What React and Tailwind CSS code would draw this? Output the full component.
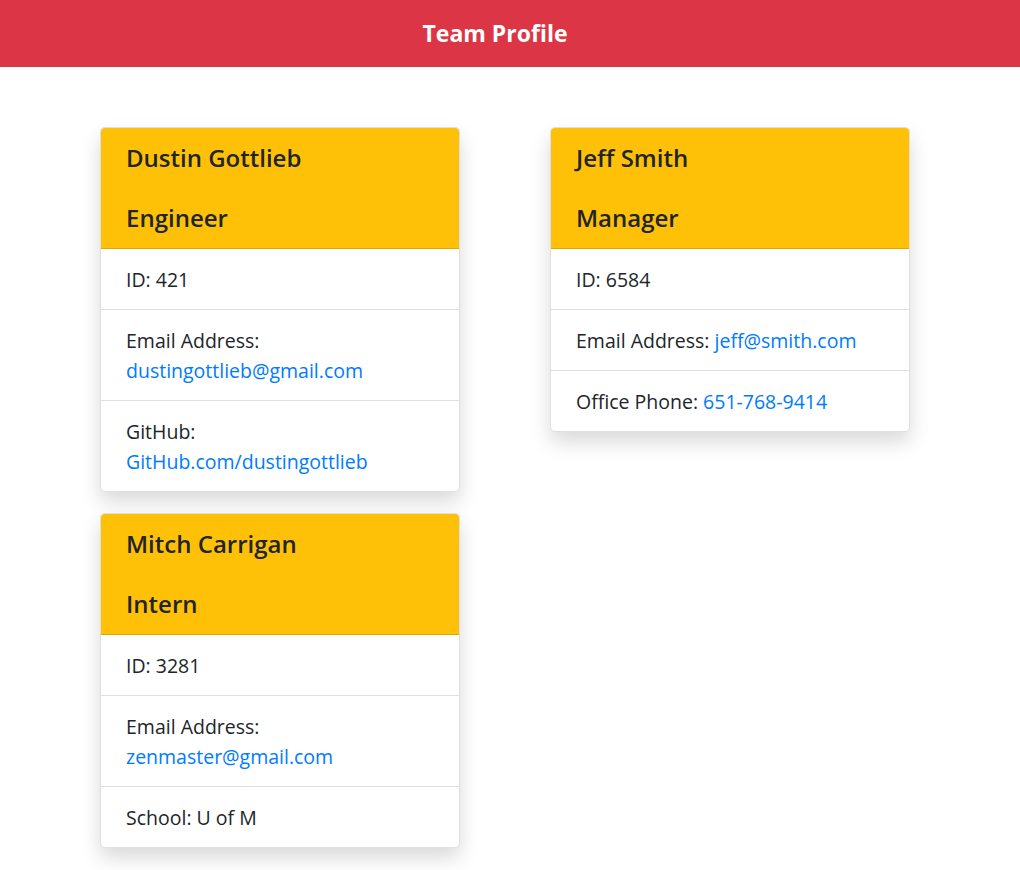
import React from "react";

const team = [
  [
    {
      name: "Dustin Gottlieb",
      role: "Engineer",
      id: "421",
      email: "dustingottlieb@gmail.com",
      extraLabel: "GitHub:",
      extra: "GitHub.com/dustingottlieb",
      extraLink: true,
    },
    {
      name: "Mitch Carrigan",
      role: "Intern",
      id: "3281",
      email: "zenmaster@gmail.com",
      extraLabel: "School:",
      extra: "U of M",
      extraLink: false,
    },
  ],
  [
    {
      name: "Jeff Smith",
      role: "Manager",
      id: "6584",
      email: "jeff@smith.com",
      extraLabel: "Office Phone:",
      extra: "651-768-9414",
      extraLink: true,
    },
  ],
];

const EmployeeCard = ({ person }) => {
  return (
    <div className="w-[360px] rounded-[5px] border border-black/[.125] bg-white shadow-[0_10px_20px_rgba(0,0,0,0.15)] overflow-hidden">
      <div className="bg-[#ffc107] border-b border-black/[.125] px-[25px] py-[12px] text-[24px] leading-[36px] font-semibold text-[#212529]">
        <div>{person.name}</div>
        <div className="mt-[24px]">{person.role}</div>
      </div>
      <ul className="text-[19.5px] leading-[30px] text-[#212529]">
        <li className="px-[25px] pt-[16px] pb-[14px] border-b border-black/[.125]">
          ID: {person.id}
        </li>
        <li className="px-[25px] pt-[16px] pb-[14px] border-b border-black/[.125]">
          Email Address:{" "}
          <a href="#" className="text-[#007bff]">
            {person.email}
          </a>
        </li>
        <li className="px-[25px] pt-[16px] pb-[14px]">
          {person.extraLabel}{" "}
          {person.extraLink ? (
            <a href="#" className="text-[#007bff]">
              {person.extra}
            </a>
          ) : (
            person.extra
          )}
        </li>
      </ul>
    </div>
  );
};

const App = () => {
  return (
    <div
      className="min-h-[870px] bg-white"
      style={{ fontFamily: '"Open Sans", "Noto Sans", sans-serif' }}
    >
      <header className="h-[67px] bg-[#dc3545] flex items-center justify-center pr-[30px]">
        <h1 className="text-white text-[23px] font-bold">Team Profile</h1>
      </header>

      <main className="flex items-start gap-[90px] pl-[100px] pt-[60px]">
        {team.map((column, i) => (
          <div key={i} className="flex flex-col gap-[21px]">
            {column.map((person) => (
              <EmployeeCard key={person.id} person={person} />
            ))}
          </div>
        ))}
      </main>
    </div>
  );
};

export default App;
